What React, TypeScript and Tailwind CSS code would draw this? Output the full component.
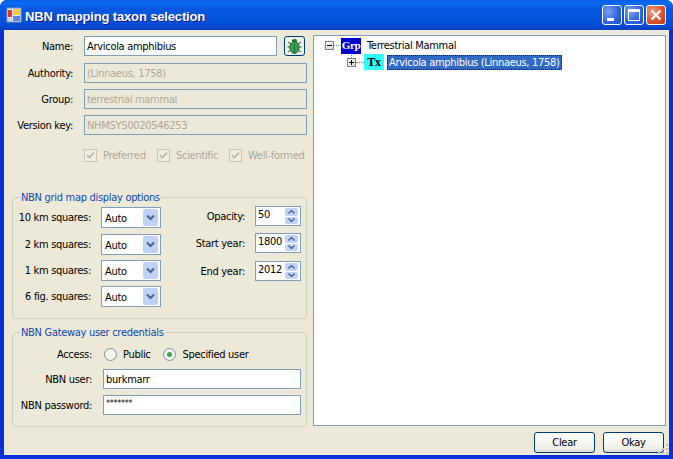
import React from "react";

const FONT = "font-['DejaVu_Sans',sans-serif] [font-stretch:condensed] text-[11px] tracking-[-0.3px] leading-none";

function WinIcon() {
  return (
    <svg width="16" height="16" viewBox="0 0 16 16" className="shrink-0">
      <rect x="1" y="1" width="14" height="14" fill="#dfe8f8" stroke="#7f93b8" />
      <rect x="2" y="3" width="4" height="7" fill="#e03a20" />
      <rect x="7" y="2" width="7" height="6" fill="#f7c83a" />
      <rect x="2" y="11" width="4" height="3" fill="#c7d5ee" />
      <rect x="7" y="9" width="7" height="5" fill="#5f86d0" />
    </svg>
  );
}

function CapButton({ kind }: { kind: "min" | "max" | "close" }) {
  const bg =
    kind === "close"
      ? "bg-[radial-gradient(circle_at_30%_30%,#e8a08a,#d8502c_60%,#b83a18)]"
      : "bg-[radial-gradient(circle_at_30%_30%,#7aa2f0,#2f63dd_60%,#2450c8)]";
  return (
    <div className={`w-[20px] h-[20px] rounded-[3px] border border-white ${bg} relative`}>
      {kind === "min" && <div className="absolute left-[4px] bottom-[3px] w-[7px] h-[3px] bg-white" />}
      {kind === "max" && <div className="absolute left-[3px] top-[3px] w-[12px] h-[12px] border border-white border-t-[3px]" />}
      {kind === "close" && (
        <svg width="18" height="18" viewBox="0 0 18 18" className="absolute left-0 top-0">
          <path d="M4.5 4.5 L13.5 13.5 M13.5 4.5 L4.5 13.5" stroke="#fff" strokeWidth="2" />
        </svg>
      )}
    </div>
  );
}

function Input({ value, disabled, className = "" }: { value: string; disabled?: boolean; className?: string }) {
  return (
    <div
      className={`h-[20px] border border-[#7f9db9] flex items-center px-[2px] overflow-hidden whitespace-nowrap ${
        disabled ? "bg-[#ece9d8] text-[#aca899]" : "bg-white text-black"
      } ${className}`}
    >
      {value}
    </div>
  );
}

function Check({ label, className = "" }: { label: string; className?: string }) {
  return (
    <div className={`flex items-center gap-[6px] text-[#aca899] whitespace-nowrap ${className}`}>
      <div className="w-[13px] h-[13px] shrink-0 border border-[#c9c7ba] bg-[#f0eee2] flex items-center justify-center">
        <svg width="9" height="9" viewBox="0 0 9 9">
          <path d="M1 4 L3.5 6.5 L8 1.5" stroke="#b5b3a5" strokeWidth="1.6" fill="none" />
        </svg>
      </div>
      <span>{label}</span>
    </div>
  );
}

function Select({ className = "" }: { className?: string }) {
  return (
    <div className={`w-[60px] h-[21px] shrink-0 border border-[#7f9db9] bg-white flex items-center pl-[3px] pr-[2px] ${className}`}>
      <span className="flex-1 pt-[1px]">Auto</span>
      <div className="w-[15px] h-[17px] bg-[#c1d2f8] rounded-[2px] flex items-center justify-center">
        <svg width="9" height="7" viewBox="0 0 9 7">
          <path d="M1 1.5 L4.5 5 L8 1.5" stroke="#4d6185" strokeWidth="2" fill="none" />
        </svg>
      </div>
    </div>
  );
}

function Spinner({ value, className = "" }: { value: string; className?: string }) {
  return (
    <div className={`w-[46px] h-[20px] shrink-0 border border-[#7f9db9] bg-white flex pl-[2px] pr-[2px] py-[1px] ${className}`}>
      <span className="flex-1 min-w-0 pt-[1px]">{value}</span>
      <div className="w-[13px] shrink-0 flex flex-col gap-[1px]">
        {[0, 1].map((i) => (
          <div key={i} className="flex-1 bg-[#c1d2f8] rounded-[2px] flex items-center justify-center">
            <svg width="7" height="4" viewBox="0 0 7 4">
              <path d={i === 0 ? "M0.5 3.5 L3.5 0.5 L6.5 3.5" : "M0.5 0.5 L3.5 3.5 L6.5 0.5"} stroke="#4d6185" strokeWidth="1.4" fill="none" />
            </svg>
          </div>
        ))}
      </div>
    </div>
  );
}

function Radio({ checked, label }: { checked?: boolean; label: string }) {
  return (
    <div className="flex items-center gap-[6px]">
      <div className="w-[13px] h-[13px] rounded-full border border-[#7b8ea6] bg-[#f4f3ec] flex items-center justify-center">
        {checked && <div className="w-[5px] h-[5px] rounded-full bg-[#3da14a]" />}
      </div>
      <span>{label}</span>
    </div>
  );
}

function Beetle() {
  return (
    <svg width="15" height="16" viewBox="0 0 15 16">
      <path d="M1 4 L4 6 M14 4 L11 6 M0.5 9 L4 9 M14.5 9 L11 9 M1 14 L4 12 M14 14 L11 12" stroke="#1c5c2c" strokeWidth="1" />
      <ellipse cx="7.5" cy="3" rx="2.6" ry="2" fill="#1f6b33" />
      <ellipse cx="7.5" cy="9.5" rx="4.6" ry="6" fill="#3ea04f" stroke="#1f6b33" />
      <path d="M7.5 5 V15" stroke="#1f6b33" />
    </svg>
  );
}

function TreeBox({ plus }: { plus?: boolean }) {
  return (
    <div className="relative w-[9px] h-[9px] shrink-0 border border-[#808080] bg-[linear-gradient(135deg,#ffffff,#d8d4c4)]">
      <div className="absolute left-[1px] top-[3px] w-[5px] h-[1px] bg-black" />
      {plus && <div className="absolute left-[3px] top-[1px] w-[1px] h-[5px] bg-black" />}
      {plus && <div className="absolute left-[3px] -top-[4px] h-[3px] border-l border-dotted border-[#808080]" />}
    </div>
  );
}

function Legend({ children }: { children: React.ReactNode }) {
  return (
    <span className="absolute left-[7px] -top-[7px] bg-[#ece9d8] px-[1px] text-[#1046b0] leading-[14px] whitespace-nowrap">
      {children}
    </span>
  );
}

function Button({ label }: { label: string }) {
  return (
    <div className="w-[61px] h-[21px] rounded-[3px] border border-[#003c74] bg-[linear-gradient(#ffffff,#f0f0ea_80%,#dcd8ce)] flex items-center justify-center text-black">
      {label}
    </div>
  );
}

function FieldRow({ label, children, className = "" }: { label: string; children: React.ReactNode; className?: string }) {
  return (
    <div className={`flex items-center ${className}`}>
      <span className="w-[61px] mr-[11px] text-right whitespace-nowrap text-black">{label}</span>
      {children}
    </div>
  );
}

export default function App() {
  const squares = ["10 km squares:", "2 km squares:", "1 km squares:", "6 fig. squares:"];
  return (
    <div className={`w-[673px] h-[459px] flex flex-col overflow-hidden rounded-t-[7px] bg-[#0831d9] ${FONT}`}>
      <div className="h-[30px] shrink-0 flex items-center pl-[6px] pr-[7px] bg-[linear-gradient(#0a5fe8_0%,#0a6af0_12%,#0758e0_30%,#0553dc_70%,#0547d0_90%,#0a3cb8_100%)]">
        <WinIcon />
        <span className="ml-[3px] pt-[3px] text-white font-bold text-[13px] tracking-[-0.15px] [font-stretch:normal] font-['Liberation_Sans',sans-serif] [text-shadow:1px_1px_#0f1089]">
          NBN mapping taxon selection
        </span>
        <div className="ml-auto flex gap-[2px]">
          <CapButton kind="min" />
          <CapButton kind="max" />
          <CapButton kind="close" />
        </div>
      </div>

      <div className="relative flex-1 mx-[4px] mb-[4px] bg-[#ece9d8] flex flex-col">
        <div className="flex pt-[5px] pl-[8px] pr-[3px]">
          <div className="w-[295px] shrink-0">
            <div className="pt-px flex flex-col">
              <FieldRow label="Name:">
                <Input value="Arvicola amphibius" className="w-[193px]" />
                <div className="ml-[7px] w-[21px] h-[20px] rounded-[3px] border border-[#003c74] bg-[#eef2e6] flex items-center justify-center">
                  <Beetle />
                </div>
              </FieldRow>
              <FieldRow label="Authority:" className="mt-[7px]">
                <Input disabled value="(Linnaeus, 1758)" className="w-[223px]" />
              </FieldRow>
              <FieldRow label="Group:" className="mt-[6px]">
                <Input disabled value="terrestrial mammal" className="w-[223px]" />
              </FieldRow>
              <FieldRow label="Version key:" className="mt-[6px]">
                <Input disabled value="NHMSYS0020546253" className="w-[223px]" />
              </FieldRow>
              <div className="flex mt-[14px] pl-[72px] h-[13px]">
                <Check label="Preferred" className="w-[73px]" />
                <Check label="Scientific" className="w-[72px]" />
                <Check label="Well-formed" />
              </div>
            </div>

            <div className="relative mt-[35px] h-[122px] border border-[#d0d0bf] rounded-[4px] pt-[9px] pr-[5px] flex justify-between">
              <Legend>NBN grid map display options</Legend>
              <div className="flex flex-col gap-[5px]">
                {squares.map((s, i) => (
                  <div key={s} className={`flex items-center ${i === 0 ? "mb-[1px]" : ""}`}>
                    <span className="w-[78px] mr-[10px] text-right whitespace-nowrap">{s}</span>
                    <Select />
                  </div>
                ))}
              </div>
              <div className="flex flex-col -mt-px">
                {[
                  ["Opacity:", "50"],
                  ["Start year:", "1800"],
                  ["End year:", "2012"],
                ].map(([l, v], i) => (
                  <div key={l} className={`flex items-center ${i === 0 ? "" : i === 1 ? "mt-[7px]" : "mt-[8px]"}`}>
                    <span className="w-[70px] mr-[10px] text-right whitespace-nowrap">{l}</span>
                    <Spinner value={v} />
                  </div>
                ))}
              </div>
            </div>

            <div className="relative mt-[13px] h-[95px] border border-[#d0d0bf] rounded-[4px] pt-[14px]">
              <Legend>NBN Gateway user credentials</Legend>
              <div className="flex items-center h-[15px]">
                <span className="w-[79px] mr-[12px] text-right">Access:</span>
                <div className="flex gap-[13px]">
                  <Radio label="Public" />
                  <Radio checked label="Specified user" />
                </div>
              </div>
              <div className="flex items-center mt-[7px]">
                <span className="w-[79px] mr-[11px] text-right">NBN user:</span>
                <Input value="burkmarr" className="w-[198px]" />
              </div>
              <div className="flex items-center mt-[6px]">
                <span className="w-[79px] mr-[11px] text-right whitespace-nowrap">NBN password:</span>
                <Input value="*******" className="w-[198px] text-[9px] items-start pt-[3px]" />
              </div>
            </div>
          </div>

          <div className="ml-[6px] w-[353px] h-[391px] border border-[#7f9db9] bg-white pl-[11px] pt-[1px]">
            <div className="flex items-center h-[17px]">
              <TreeBox />
              <div className="w-[7px] border-t border-dotted border-[#808080]" />
              <div className="w-[20px] h-[16px] bg-[#0000cc] text-white font-bold text-[11px] font-['Liberation_Serif',serif] flex items-center justify-center">
                Grp
              </div>
              <span className="ml-[6px]">Terrestrial Mammal</span>
            </div>
            <div className="flex items-center h-[16px] pl-[22px]">
              <TreeBox plus />
              <div className="w-[8px] border-t border-dotted border-[#808080]" />
              <div className="w-[20px] h-[16px] bg-[#33ffff] text-black font-bold text-[12px] font-['Liberation_Serif',serif] flex items-center justify-center">
                Tx
              </div>
              <span className="ml-[3px] h-[15px] px-[1px] flex items-center bg-[#316ac5] text-white border border-dotted border-[#1a1a1a]">
                Arvicola amphibius (Linnaeus, 1758)
              </span>
            </div>
          </div>
        </div>

        <div className="flex justify-end gap-[8px] pt-[5px] pr-[5px]">
          <Button label="Clear" />
          <Button label="Okay" />
        </div>
        <svg width="12" height="12" viewBox="0 0 12 12" className="absolute right-0 bottom-0">
          <path d="M9 1h2v2h-2z M5 5h2v2h-2z M9 5h2v2h-2z M1 9h2v2h-2z M5 9h2v2h-2z M9 9h2v2h-2z" fill="#c4c1b0" />
        </svg>
      </div>
    </div>
  );
}
